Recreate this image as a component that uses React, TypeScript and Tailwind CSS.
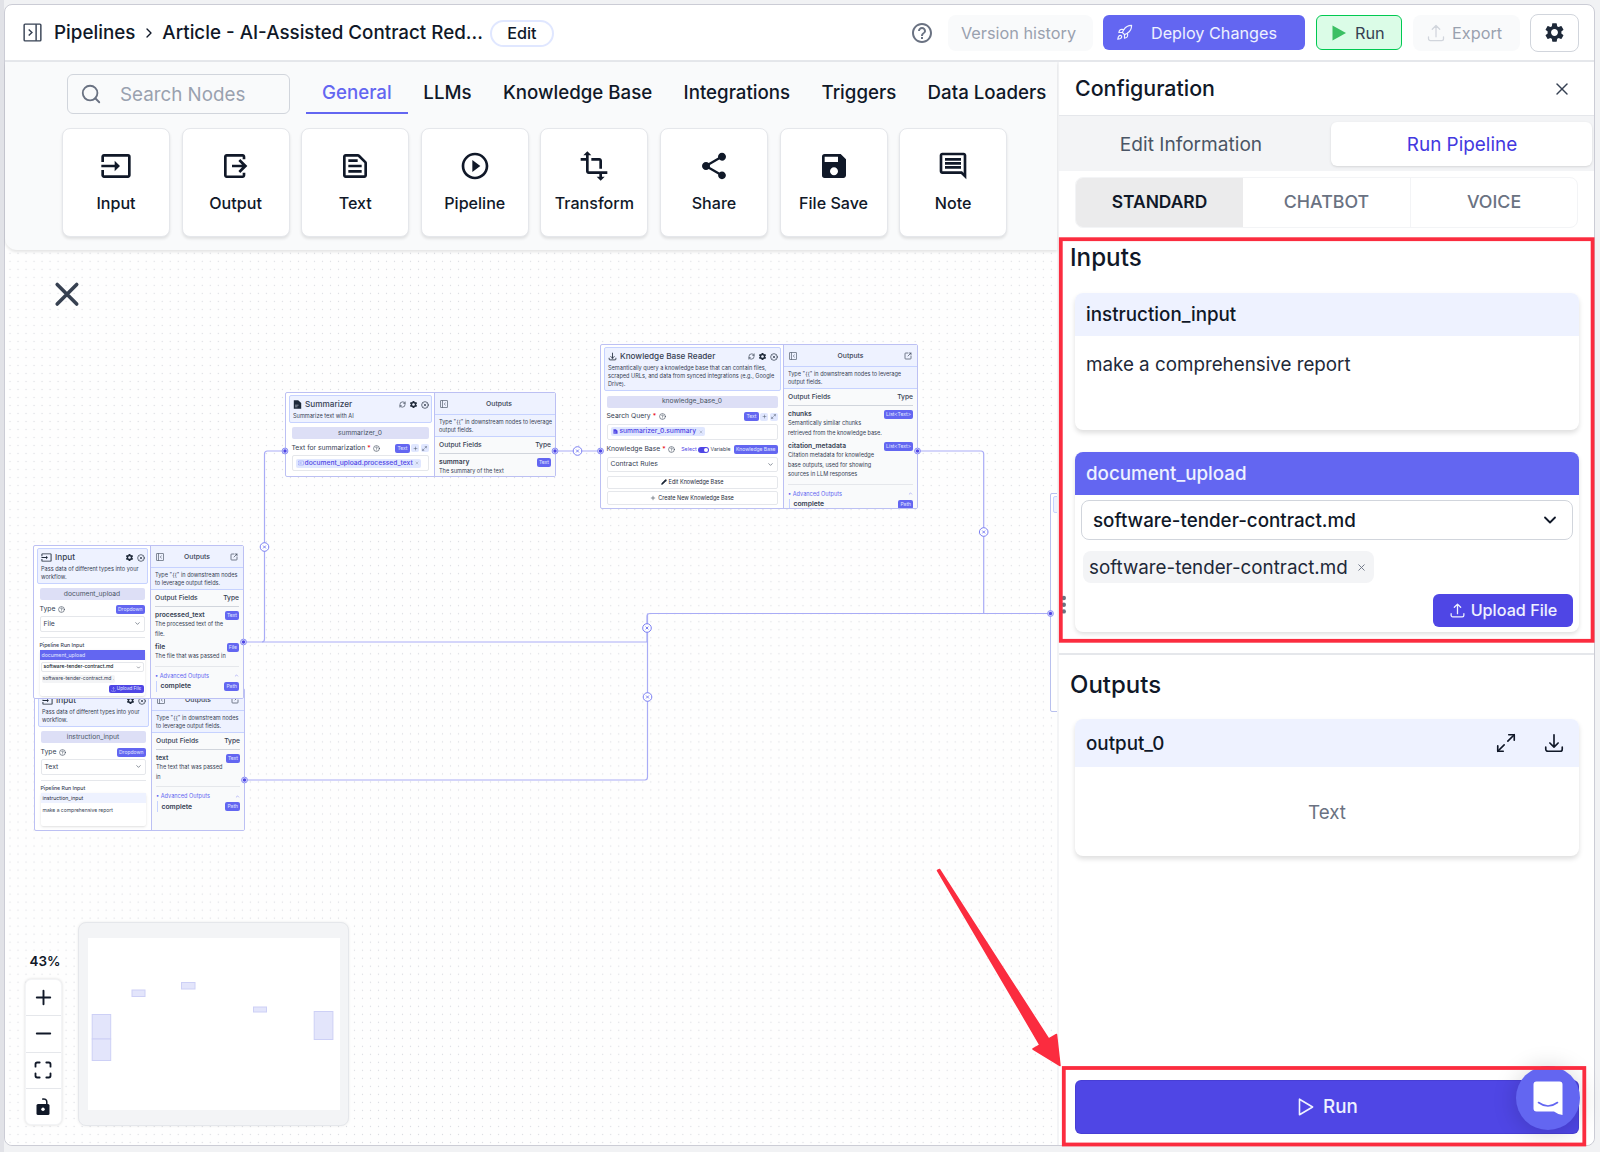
import React from 'react';
import {
  ChevronDown,
  ChevronRight,
  ChevronUp,
  CircleQuestionMark,
  CircleX,
  Maximize,
  Maximize2,
  Minus,
  Pencil,
  Plus,
  RefreshCw,
  Rocket,
  Search,
  SquareArrowOutUpRight,
  X,
} from 'lucide-react';
import {
  MdHelpOutline,
  MdInput,
  MdOutlineComment,
  MdOutlineTextSnippet,
  MdPlayCircleOutline,
  MdSave,
  MdSettings,
  MdShare,
  MdTransform,
} from 'react-icons/md';
import { HiOutlineArrowDownTray, HiOutlineArrowUpTray } from 'react-icons/hi2';

/* ---------- icons ---------- */

const PanelIcon = ({ className = '', flip = false }: { className?: string; flip?: boolean }) => (
  <svg viewBox="0 0 20 20" fill="none" stroke="currentColor" strokeWidth="1.5" className={className}>
    <g transform={flip ? 'matrix(-1 0 0 1 20 0)' : undefined}>
      <rect x="1.2" y="1.2" width="17.6" height="17.6" rx="1" />
      <path d="M13.8 1.2v17.6M6 6.8l3.4 3.2L6 13.2" />
    </g>
  </svg>
);

const OutputIcon = ({ className = '' }: { className?: string }) => (
  <svg viewBox="0 0 24 24" fill="currentColor" className={className}>
    <path d="M17 17v2.1H5V5h12v2h2V5c0-1.1-.9-2-2-2H5c-1.1 0-2 .9-2 2v14c0 1.1.9 2 2 2h12c1.1 0 2-.9 2-2v-2z" />
    <path d="M15.2 6.8l-1.4 1.4 2.7 2.8H9v2h7.5l-2.7 2.8 1.4 1.4 5.3-5.2z" />
  </svg>
);

const PlayOutline = ({ className = '' }: { className?: string }) => (
  <svg viewBox="0 0 16 18" fill="none" stroke="currentColor" strokeWidth="1.6" strokeLinejoin="round" className={className}>
    <path d="M1.5 1.2v15.6L14.6 9z" />
  </svg>
);

const UnlockIcon = ({ className = '' }: { className?: string }) => (
  <svg viewBox="0 0 14 17" className={className}>
    <rect x="0.5" y="6" width="13" height="11" rx="1.5" fill="currentColor" />
    <path d="M6.2 1.3c2.6-1 4.6.4 4.6 2.5V6" fill="none" stroke="currentColor" strokeWidth="1.5" />
    <circle cx="7" cy="11.3" r="1.7" fill="#fff" />
  </svg>
);

/* ---------- header ---------- */

const Header: React.FC = () => (
  <header className="flex h-[57px] shrink-0 items-center border-b-2 border-gray-200 pl-[18px] pr-[15px] text-gray-900">
    <PanelIcon className="h-[19px] w-[19px] text-gray-700" />
    <span className="ml-3 pt-px text-[18.8px] font-medium">Pipelines</span>
    <ChevronRight className="mx-[5.5px] h-4 w-4" strokeWidth={2} />
    <span className="pt-px text-[18.8px] font-medium">Article - AI-Assisted Contract Red...</span>
    <button className="mt-px ml-[7px] h-[27px] w-[64px] rounded-full border-2 border-indigo-100 text-[16.2px] leading-none font-medium">Edit</button>

    <div className="ml-auto flex items-center">
      <MdHelpOutline className="mr-[14px] h-6 w-6 text-gray-500" />
      <button className="mr-[10px] h-9 w-[145px] rounded-lg bg-gray-50 pt-px pr-[4px] text-[16.3px] text-gray-400">Version history</button>
      <button className="mr-[11px] flex h-[35px] w-[202px] items-center rounded-md bg-[#6366f1] pl-[13px] text-[16.2px] text-indigo-50">
        <Rocket className="mr-[18px] h-[17px] w-[17px]" strokeWidth={1.7} />
        <span className="pt-px">Deploy Changes</span>
      </button>
      <button className="mr-[11px] flex h-[35px] w-[86px] items-center rounded-md border-[1.5px] border-green-500 bg-green-100 pl-[15px] text-[16.3px] text-gray-700">
        <svg viewBox="0 0 14 16" className="mr-[9px] h-4 w-[14px] fill-[#3bbf63]">
          <path d="M0.5 0.5v15L14 8z" />
        </svg>
        <span className="pt-px">Run</span>
      </button>
      <button className="mr-[10px] flex h-9 w-[107px] items-center rounded-lg bg-gray-50 pl-[13px] text-[16.3px] text-gray-400">
        <HiOutlineArrowUpTray className="mr-[6px] h-5 w-5 text-gray-300" />
        <span className="pt-px">Export</span>
      </button>
      <button className="flex h-[38px] w-[49px] items-center justify-center rounded-lg border-[1.5px] border-gray-300">
        <MdSettings className="h-[23px] w-[23px] text-gray-800" />
      </button>
    </div>
  </header>
);

/* ---------- node toolbar ---------- */

const tabs = ['General', 'LLMs', 'Knowledge Base', 'Integrations', 'Triggers', 'Data Loaders'];

const palette = [
  { label: 'Input', icon: MdInput },
  { label: 'Output', icon: OutputIcon },
  { label: 'Text', icon: MdOutlineTextSnippet },
  { label: 'Pipeline', icon: MdPlayCircleOutline },
  { label: 'Transform', icon: MdTransform },
  { label: 'Share', icon: MdShare },
  { label: 'File Save', icon: MdSave },
  { label: 'Note', icon: MdOutlineComment },
];

const Toolbar: React.FC = () => (
  <div className="z-10 h-[188px] shrink-0 rounded-bl-xl bg-gray-50 pt-[10px] shadow-[0_2px_3px_rgba(0,0,0,0.1)]">
    <div className="flex h-[43px] pl-[62px]">
      <div className="mt-[2px] flex h-10 w-[223px] shrink-0 items-center rounded-md border-[1.5px] border-gray-300 pl-[12px]">
        <Search className="h-[22px] w-[22px] text-gray-500" strokeWidth={2} />
        <span className="ml-[18px] pt-[2px] text-[18.8px] text-gray-400">Search Nodes</span>
      </div>
      <nav className="ml-4 flex">
        {tabs.map((tab, i) => (
          <div
            key={tab}
            className={
              i === 0
                ? 'h-[42px] border-b-2 border-[#6366f1] px-4 pt-[7px] text-[18.7px] font-medium whitespace-nowrap text-[#6366f1]'
                : 'h-[42px] px-[15.7px] pt-[7px] text-[18.7px] font-medium whitespace-nowrap text-gray-900'
            }
          >
            {tab}
          </div>
        ))}
      </nav>
    </div>
    <div className="mt-[13px] flex gap-[11.6px] pl-[57px]">
      {palette.map(({ label, icon: Icon }) => (
        <div
          key={label}
          className="flex h-[109px] w-[108px] shrink-0 flex-col items-center rounded-lg border-[1.5px] border-gray-200 bg-white pt-[21px] text-gray-900 shadow-[0_2px_3px_rgba(0,0,0,0.1)]"
        >
          <Icon className="h-8 w-8" />
          <span className="mt-[9px] text-[16.1px] leading-6 font-medium whitespace-nowrap">{label}</span>
        </div>
      ))}
    </div>
  </div>
);

/* ---------- pipeline nodes ---------- */

const Badge = ({ children }: { children: React.ReactNode }) => (
  <span className="flex h-[9px] shrink-0 items-center rounded-[2px] bg-[#6366f1] px-[2px] text-[5px] leading-none whitespace-nowrap text-indigo-100">
    {children}
  </span>
);

const SoftButton = ({ children }: { children: React.ReactNode }) => (
  <span className="flex h-[8px] w-[8px] items-center justify-center rounded-[2px] bg-indigo-100 text-gray-700">{children}</span>
);

interface NodeHeadProps {
  icon: React.ReactNode;
  title: string;
  lines: string[];
  refresh?: boolean;
  className: string;
}

const NodeHead = ({ icon, title, lines, refresh = false, className }: NodeHeadProps) => (
  <div className={`rounded-[2px] border border-indigo-200 bg-[#eef2ff] pl-[3.5px] ${className}`}>
    <div className="flex h-[17px] items-center pr-[2px] text-gray-800">
      {icon}
      <span className="ml-[3px] text-[8.2px] font-medium whitespace-nowrap text-gray-700">{title}</span>
      <span className="ml-auto flex items-center gap-[3px]">
        {refresh && <RefreshCw className="h-[7px] w-[7px]" />}
        <MdSettings className="h-[9px] w-[9px]" />
        <CircleX className="h-[8px] w-[8px]" />
      </span>
    </div>
    {lines.map((line) => (
      <p key={line} className="relative top-[-1px] text-[5.6px] leading-[8px] whitespace-nowrap text-gray-700">{line}</p>
    ))}
  </div>
);

const Slug = ({ children }: { children: React.ReactNode }) => (
  <div className="mx-[3px] mt-[4.5px] flex h-[12px] items-center justify-center rounded-[2px] bg-[#dddff6] text-[6.7px] text-gray-600">
    {children}
  </div>
);

const FieldRow = ({ label, required = false, children }: { label: string; required?: boolean; children: React.ReactNode }) => (
  <div className="mx-[3px] flex h-[16px] items-center pt-[2px] text-[6.8px] whitespace-nowrap text-gray-700">
    {label}
    {required && <span className="ml-[2px] text-red-600">*</span>}
    <CircleQuestionMark className="ml-[2.5px] h-[7px] w-[7px]" />
    <span className="ml-auto flex items-center gap-[1.5px]">{children}</span>
  </div>
);

const NodeSelect = ({ children }: { children: React.ReactNode }) => (
  <div className="mx-[3px] flex h-[15.5px] items-center justify-between rounded-[2px] border border-gray-200 bg-white px-[3px] text-[6.8px] text-gray-700">
    {children}
    <ChevronDown className="h-[7px] w-[7px]" />
  </div>
);

interface Field {
  name: string;
  type: string;
  lines: string[];
}

const OutputsPanel = ({ hint, fields, complete = true, open = true }: { hint: string[]; fields: Field[]; complete?: boolean; open?: boolean }) => (
  <div className="min-w-0 flex-1 overflow-hidden bg-gray-50 text-gray-700">
    <div className="flex h-[22px] items-center justify-between border-b border-indigo-200 bg-[#eef2ff] pt-[1px] pr-[5px] pl-[5px]">
      <PanelIcon flip className="h-[8px] w-[8px]" />
      <span className="text-[6.8px] font-medium">Outputs</span>
      {open ? <SquareArrowOutUpRight className="h-[8px] w-[8px]" /> : <span />}
    </div>
    <div className="h-[22px] border-b border-indigo-200 bg-[#eef2ff] pt-[2.5px] pl-[4px]">
      {hint.map((line) => (
        <p key={line} className="text-[5.55px] leading-[8px] whitespace-nowrap">{line}</p>
      ))}
    </div>
    <div className="mr-[4px] ml-[4px]">
      <div className="flex h-[17px] items-center justify-between border-b border-gray-300 pt-[1px] text-[6.7px] font-medium whitespace-nowrap">
        <span>Output Fields</span>
        <span>Type</span>
      </div>
      {fields.map((field) => (
        <div key={field.name} className="mt-[3.2px]">
          <div className="flex h-[10px] items-center justify-between">
            <span className="text-[6.7px] font-semibold">{field.name}</span>
            <Badge>{field.type}</Badge>
          </div>
          {field.lines.map((line) => (
            <p key={line} className="text-[5.6px] leading-[9.5px] whitespace-nowrap">{line}</p>
          ))}
        </div>
      ))}
      {complete && (
        <div className="mt-[4px] border-t border-gray-200 pt-[4px]">
          <div className="flex h-[10px] items-center justify-between text-[5.6px] whitespace-nowrap text-[#6366f1]">
            <span>• Advanced Outputs</span>
            <ChevronUp className="h-[5px] w-[5px]" />
          </div>
          <div className="ml-[1px] flex h-[11px] items-center justify-between border-l border-indigo-200 pl-[3.5px]">
            <span className="text-[6.8px] font-semibold">complete</span>
            <Badge>Path</Badge>
          </div>
        </div>
      )}
    </div>
  </div>
);

const NodeShell = ({ left, right, className, leftWidth }: { left: React.ReactNode; right: React.ReactNode; className: string; leftWidth: string }) => (
  <div className={`absolute flex overflow-hidden rounded-[2px] border-[1.5px] border-[#bcc0f3] bg-white ${className}`}>
    <div className={`shrink-0 border-r-[1.5px] border-[#bcc0f3] px-[2.5px] pt-[2px] ${leftWidth}`}>{left}</div>
    {right}
  </div>
);

const inputHint = ['Type "{{" in downstream nodes', 'to leverage output fields.'];
const wideHint = ['Type "{{" in downstream nodes to leverage', 'output fields.'];
const inputLines = ['Pass data of different types into your', 'workflow.'];

const InstructionNode = () => (
  <NodeShell
    className="top-[438px] left-[29px] h-[143px] w-[211px]"
    leftWidth="w-[117px]"
    left={
      <>
        <NodeHead className="h-[35.5px]" icon={<MdInput className="h-[11px] w-[11px]" />} title="Input" lines={inputLines} />
        <Slug>instruction_input</Slug>
        <FieldRow label="Type"><Badge>Dropdown</Badge></FieldRow>
        <NodeSelect>Text</NodeSelect>
        <div className="mx-[3px] mt-[5.5px] border-t border-gray-200 pt-[3px] text-[5.2px] leading-[8px] font-medium text-gray-700">Pipeline Run Input</div>
        <div className="mx-[3px] mt-[1px] h-[33px] rounded-[2px] bg-white shadow">
          <div className="h-[10px] bg-[#eef2ff] pl-[2px] text-[5.2px] leading-[10px] text-gray-800">instruction_input</div>
          <p className="pt-[2px] pl-[2px] text-[5px] leading-[10px] whitespace-nowrap text-gray-700">make a comprehensive report</p>
        </div>
      </>
    }
    right={<OutputsPanel hint={inputHint} fields={[{ name: 'text', type: 'Text', lines: ['The text that was passed', 'in'] }]} />}
  />
);

const DocumentNode = () => (
  <NodeShell
    className="top-[295px] left-[28px] h-[154px] w-[211px]"
    leftWidth="w-[117px]"
    left={
      <>
        <NodeHead className="h-[35.5px]" icon={<MdInput className="h-[11px] w-[11px]" />} title="Input" lines={inputLines} />
        <Slug>document_upload</Slug>
        <FieldRow label="Type"><Badge>Dropdown</Badge></FieldRow>
        <NodeSelect>File</NodeSelect>
        <div className="mx-[3px] mt-[5.5px] border-t border-gray-200 pt-[3px] text-[5.2px] leading-[8px] font-medium text-gray-700">Pipeline Run Input</div>
        <div className="mx-[3px] mt-[1px] h-[46px] rounded-[2px] bg-white shadow">
          <div className="h-[10px] bg-[#6366f1] pl-[2px] text-[5.2px] leading-[10px] text-indigo-100">document_upload</div>
          <div className="mx-[1px] mt-[2px] flex h-[10px] items-center justify-between rounded-[2px] border border-gray-200 px-[2px] text-[5px] font-medium text-gray-900">
            software-tender-contract.md
            <ChevronDown className="h-[5px] w-[5px]" />
          </div>
          <div className="mt-[3px] ml-[2px] flex h-[8px] w-[73px] items-center rounded-[2px] bg-gray-100 pl-[1px] text-[5px] whitespace-nowrap text-gray-700">
            software-tender-contract.md
            <X className="ml-[2px] h-[3px] w-[3px]" />
          </div>
          <div className="mt-[2px] mr-[1px] ml-auto flex h-[8px] w-[35px] items-center justify-center gap-[1px] rounded-[2px] bg-[#4f46e5] text-[4.6px] text-indigo-100">
            <HiOutlineArrowUpTray className="h-[5px] w-[5px]" />
            Upload File
          </div>
        </div>
      </>
    }
    right={
      <OutputsPanel
        hint={inputHint}
        fields={[
          { name: 'processed_text', type: 'Text', lines: ['The processed text of the', 'file.'] },
          { name: 'file', type: 'File', lines: ['The file that was passed in'] },
        ]}
      />
    }
  />
);

const FileGlyph = ({ className = '' }: { className?: string }) => (
  <svg viewBox="0 0 9 9" className={className} fill="currentColor">
    <path d="M0.8 0.3H5.2L8.2 3v5.7H0.8z" />
    <path d="M2 5.2h3.5M2 6.8h2.5" stroke="#eef2ff" strokeWidth="0.5" />
  </svg>
);

const SummarizerNode = () => (
  <NodeShell
    className="top-[142px] left-[280px] h-[85px] w-[271px]"
    leftWidth="w-[149px]"
    left={
      <>
        <NodeHead className="h-[27.5px]" refresh icon={<FileGlyph className="h-[9px] w-[9px]" />} title="Summarizer" lines={['Summarize text with AI']} />
        <Slug>summarizer_0</Slug>
        <FieldRow label="Text for summarization" required>
          <Badge>Text</Badge>
          <SoftButton><Plus className="h-[5px] w-[5px]" /></SoftButton>
          <SoftButton><Maximize2 className="h-[5px] w-[5px]" /></SoftButton>
        </FieldRow>
        <div className="mx-[3px] flex h-[16px] items-center rounded-[2px] border border-gray-200 px-[3px]">
          <span className="flex h-[9px] items-center rounded-[2px] bg-indigo-100 px-[2px] text-[6.7px] font-medium whitespace-nowrap text-[#4f46e5]">
            <MdInput className="mr-[1px] h-[6px] w-[6px] text-[#818cf8]" />
            document_upload.processed_text
            <X className="ml-[2px] h-[4px] w-[4px] text-gray-500" />
          </span>
        </div>
      </>
    }
    right={<OutputsPanel open={false} complete={false} hint={wideHint} fields={[{ name: 'summary', type: 'Text', lines: ['The summary of the text'] }]} />}
  />
);

const KnowledgeNode = () => (
  <NodeShell
    className="top-[94px] left-[595px] h-[165px] w-[318px]"
    leftWidth="w-[183px]"
    left={
      <>
        <NodeHead
          className="h-[44px]"
          refresh
          icon={<HiOutlineArrowDownTray className="h-[9px] w-[9px]" strokeWidth={2.2} />}
          title="Knowledge Base Reader"
          lines={['Semantically query a knowledge base that can contain files,', 'scraped URLs, and data from synced integrations (e.g., Google', 'Drive).']}
        />
        <Slug>knowledge_base_0</Slug>
        <FieldRow label="Search Query" required>
          <Badge>Text</Badge>
          <SoftButton><Plus className="h-[5px] w-[5px]" /></SoftButton>
          <SoftButton><Maximize2 className="h-[5px] w-[5px]" /></SoftButton>
        </FieldRow>
        <div className="mx-[3px] flex h-[16px] items-center rounded-[2px] border border-gray-200 px-[3px]">
          <span className="flex h-[9px] items-center rounded-[2px] bg-indigo-100 px-[2px] text-[6.7px] font-medium whitespace-nowrap text-[#4f46e5]">
            <FileGlyph className="mr-[2px] h-[5px] w-[5px]" />
            summarizer_0.summary
            <X className="ml-[3px] h-[4px] w-[4px] text-gray-500" />
          </span>
        </div>
        <div className="pt-[1px]">
          <FieldRow label="Knowledge Base" required>
            <span className="text-[5.2px] text-[#4f46e5]">Select</span>
            <span className="flex h-[6px] w-[11px] items-center justify-end rounded-full bg-[#4f46e5] p-[1px]">
              <span className="h-[4px] w-[4px] rounded-full bg-white" />
            </span>
            <span className="mr-[2px] text-[5.2px]">Variable</span>
            <Badge>Knowledge Base</Badge>
          </FieldRow>
        </div>
        <NodeSelect>Contract Rules</NodeSelect>
        <div className="mx-[3px] mt-[3.5px] flex h-[13.5px] items-center justify-center gap-[2px] rounded-[2px] border border-gray-200 text-[5.5px] text-gray-800">
          <Pencil className="h-[6px] w-[6px] fill-gray-800" />
          Edit Knowledge Base
        </div>
        <div className="mx-[3px] mt-[2px] flex h-[13.5px] items-center justify-center gap-[2px] rounded-[2px] border border-gray-200 text-[5.5px] text-gray-800">
          <Plus className="h-[6px] w-[6px]" />
          Create New Knowledge Base
        </div>
      </>
    }
    right={
      <OutputsPanel
        hint={wideHint}
        fields={[
          { name: 'chunks', type: 'List<Text>', lines: ['Semantically similar chunks', 'retrieved from the knowledge base.'] },
          { name: 'citation_metadata', type: 'List<Text>', lines: ['Citation metadata for knowledge', 'base outputs, used for showing', 'sources in LLM responses'] },
        ]}
      />
    }
  />
);

/* ---------- canvas ---------- */

const handles = [
  [243.5, 642],
  [244.5, 780],
  [285, 451],
  [555, 451],
  [600.5, 451],
  [917.5, 451],
  [1050.5, 613.5],
];

const edgeButtons = [
  [264.5, 547],
  [577.5, 451],
  [647, 628],
  [647.5, 697],
  [983.7, 532],
];

const Handles: React.FC = () => (
  <svg viewBox="5 250 1052 895" className="absolute inset-0 h-[895px] w-[1052px]">
    {handles.map(([x, y]) => (
      <g key={`${x}-${y}`}>
        <circle cx={x} cy={y} r="2.9" fill="#e0e3fd" stroke="#8b8ef5" strokeWidth="1" />
        <circle cx={x} cy={y} r="1.7" fill="#4f46e5" />
      </g>
    ))}
    {edgeButtons.map(([x, y]) => (
      <g key={`${x}-${y}`} stroke="#7c80f3" strokeWidth="1">
        <circle cx={x} cy={y} r="4.3" fill="#fff" />
        <path d={`M${x - 1.4} ${y - 1.4}l2.8 2.8m0-2.8l-2.8 2.8`} />
      </g>
    ))}
  </svg>
);

const miniNodes = [
  { x: 131.5, y: 990, w: 13, h: 6.5 },
  { x: 181, y: 982.5, w: 13.5, h: 6.5 },
  { x: 253, y: 1007, w: 13, h: 5 },
  { x: 91.7, y: 1014.5, w: 18.5, h: 24.5 },
  { x: 91.7, y: 1039, w: 18.5, h: 21.5 },
  { x: 313.7, y: 1011.5, w: 18.7, h: 28 },
];

const Canvas: React.FC = () => (
  <div className="relative flex-1 overflow-hidden rounded-bl-lg bg-[#fefefe]">
    <svg viewBox="5 250 1052 895" className="absolute inset-0 h-[895px] w-[1052px]" fill="none">
      <defs>
        <pattern id="dots" x="6" y="249.3" width="8.01" height="8.01" patternUnits="userSpaceOnUse">
          <circle cx="4" cy="4" r="0.62" fill="#d6d8de" />
        </pattern>
      </defs>
      <rect x="5" y="250" width="1052" height="895" fill="url(#dots)" />
      <g stroke="#a9acf6" strokeWidth="1.2">
        <path d="M243 642H647V616.5Q647 613.5 650 613.5H1050" />
        <path d="M262 642Q264.5 642 264.5 639V454Q264.5 451 267.5 451H285" />
        <path d="M555 451H600" />
        <path d="M917 451H981Q983.7 451 983.7 454V613.5" />
        <path d="M244 780H645Q647.5 780 647.5 777V613.5" />
      </g>
      <path d="M57.2 284.5L76.7 304M76.7 284.5L57.2 304" stroke="#374151" strokeWidth="3.6" strokeLinecap="round" />
    </svg>

    <InstructionNode />
    <DocumentNode />
    <SummarizerNode />
    <KnowledgeNode />
    <div className="absolute top-[243px] left-[1045px] h-[219px] w-[40px] rounded-[2px] border-[1.5px] border-[#b8c0ee] bg-white p-[2px]">
      <div className="h-[17px] rounded-[2px] border border-indigo-200 bg-[#eef2ff]" />
    </div>
    <Handles />

    <div className="absolute bottom-[20px] left-[19.5px] flex w-[37px] flex-col items-center text-gray-900">
      <span className="mb-[8px] ml-[4px] text-[13.4px] leading-5 font-semibold">43%</span>
      <div className="flex h-[146px] w-[37px] flex-col divide-y-[1.5px] divide-gray-200 rounded-md border border-gray-100 bg-white shadow-[0_0_3px_rgba(0,0,0,0.15)]">
        <span className="flex flex-1 items-center justify-center"><Plus className="h-[23px] w-[23px]" /></span>
        <span className="flex flex-1 items-center justify-center"><Minus className="h-[23px] w-[23px]" /></span>
        <span className="flex flex-1 items-center justify-center"><Maximize className="h-[20px] w-[20px]" strokeWidth={2.2} /></span>
        <span className="flex flex-1 items-center justify-center"><UnlockIcon className="h-[17px] w-[14px]" /></span>
      </div>
    </div>

    <div className="absolute top-[672px] left-[73px] h-[204px] w-[271px] rounded-lg border border-gray-200 bg-gray-100 pt-[15px] pl-[9px] shadow-[0_0_3px_rgba(0,0,0,0.08)]">
      <svg viewBox="88 938 252 172" className="h-[172px] w-[252px] bg-white">
        {miniNodes.map((n) => (
          <rect key={`${n.x}-${n.y}`} x={n.x + 0.5} y={n.y} width={n.w} height={n.h} fill="#e3e5fb" stroke="#cdd0f6" />
        ))}
      </svg>
    </div>
  </div>
);

/* ---------- configuration panel ---------- */

const ConfigPanel: React.FC = () => (
  <aside className="relative flex w-[537px] shrink-0 flex-col rounded-br-lg border-l-2 border-gray-100 bg-white text-gray-900">
    <div className="flex h-[54px] shrink-0 items-center justify-between border-b-[1.5px] border-gray-200 pr-[22px] pl-[16px]">
      <h2 className="text-[21.4px] font-medium">Configuration</h2>
      <X className="h-[20px] w-[20px] text-gray-700" strokeWidth={1.7} />
    </div>
    <div className="flex h-[55px] shrink-0 bg-gray-100 pt-[6px] pb-[5px] pr-[2px] text-[19.1px]">
      <div className="flex w-[272px] items-center justify-center text-gray-600">
        <span className="-ml-[8px] pt-px">Edit Information</span>
      </div>
      <div className="flex flex-1 items-center justify-center rounded-md bg-white text-[18.9px] shadow-sm">
        <span className="ml-px pt-[2px] text-[#4338e0]">Run Pipeline</span>
      </div>
    </div>
    <div className="mt-[6px] ml-[16px] flex h-[51px] w-[503px] shrink-0 overflow-hidden rounded-lg border border-gray-100 text-[17.8px] font-medium text-gray-500">
      <div className="flex w-[167px] items-center justify-center bg-[#ebebec] text-[17.4px] font-semibold text-gray-900">STANDARD</div>
      <div className="flex w-[168px] items-center justify-center border-r border-gray-100">CHATBOT</div>
      <div className="flex flex-1 items-center justify-center">VOICE</div>
    </div>

    <h3 className="mt-[13px] ml-[11px] text-[24.2px] leading-[34px] font-medium">Inputs</h3>
    <div className="mt-[18px] ml-[16px] h-[137px] w-[504px] shrink-0 overflow-hidden rounded-lg bg-white shadow-[0_3px_5px_rgba(0,0,0,0.13)]">
      <div className="flex h-[43px] items-center bg-[#eef2ff] pt-[2px] pl-[11px] text-[18.8px] font-medium">instruction_input</div>
      <p className="pt-[15px] pl-[11px] text-[18.8px] leading-[28px] text-gray-800">make a comprehensive report</p>
    </div>
    <div className="mt-[22px] ml-[16px] h-[180px] w-[504px] shrink-0 overflow-hidden rounded-lg bg-white shadow-[0_2px_4px_rgba(0,0,0,0.13)]">
      <div className="flex h-[43px] items-center bg-[#6366f1] pt-[2px] pl-[11px] text-[18.8px] font-medium text-indigo-50">document_upload</div>
      <div className="mx-[6px] mt-[5px] flex h-[40px] items-center justify-between rounded-lg border-[1.5px] border-gray-300 pr-[12px] pl-[11px] text-[18.8px] font-medium">
        <span className="pt-[2px]">software-tender-contract.md</span>
        <ChevronDown className="h-[20px] w-[20px]" strokeWidth={2.2} />
      </div>
      <div className="mt-[11px] ml-[8px] flex h-[32px] w-[291px] items-center rounded-lg bg-gray-100 pl-[6px] text-[18.8px] text-gray-800">
        <span className="pt-[2px]">software-tender-contract.md</span>
        <X className="ml-[8px] h-[11px] w-[11px] text-gray-500" />
      </div>
      <button className="mt-[11px] mr-[6px] ml-auto flex h-[33px] w-[140px] items-center justify-center gap-[5px] rounded-md bg-[#4f46e5] text-[16.2px] font-medium text-indigo-50">
        <HiOutlineArrowUpTray className="h-[17px] w-[17px]" strokeWidth={1.8} />
        Upload File
      </button>
    </div>

    <div className="mt-[21px] h-0 shrink-0 border-t-2 border-gray-200" />
    <h3 className="mt-[13px] ml-[11px] text-[24px] leading-[34px] font-medium">Outputs</h3>
    <div className="mt-[17px] ml-[16px] h-[137px] w-[504px] shrink-0 overflow-hidden rounded-lg bg-white shadow-[0_3px_5px_rgba(0,0,0,0.13)]">
      <div className="flex h-[48px] items-center bg-[#eef2ff] pr-[14px] pl-[11px] text-[18.8px] font-medium">
        <span className="pt-[2px]">output_0</span>
        <Maximize2 className="mr-[26px] ml-auto h-[22px] w-[22px]" strokeWidth={1.8} />
        <HiOutlineArrowDownTray className="h-[22px] w-[22px]" strokeWidth={1.8} />
      </div>
      <p className="pt-[32px] text-center text-[18.8px] leading-[28px] text-gray-500">Text</p>
    </div>

    <button className="mt-auto mb-[11px] ml-[16px] flex h-[54px] w-[504px] shrink-0 items-center justify-center gap-[9px] rounded-md border border-[#4338ca]/60 bg-[#4f46e5] text-[18.8px] font-medium text-indigo-50">
      <PlayOutline className="ml-[2px] h-[18px] w-[16px]" />
      <span className="pt-px">Run</span>
    </button>

    {/* support chat launcher */}
    <div className="absolute right-[14px] bottom-[15px] flex h-16 w-16 items-center justify-center rounded-full bg-[#6366f1] shadow-[0_2px_24px_rgba(0,0,0,0.18)]">
      <svg viewBox="0 0 30 34" className="h-[34px] w-[30px]">
        <path d="M3.5 0.5h23Q29.5 0.5 29.5 3.5V34Q25 33.5 21 30.5H3.5Q0.5 30.5 0.5 27.5V3.5Q0.5 0.5 3.5 0.5z" fill="#fff" />
        <path d="M5.5 21.5Q15 28.5 24.5 21.5" fill="none" stroke="#6366f1" strokeWidth="1.6" strokeLinecap="round" />
      </svg>
    </div>
  </aside>
);

/* red call-outs drawn over the page */
const Annotations: React.FC = () => (
  <svg viewBox="0 0 1600 1152" className="pointer-events-none absolute inset-0 z-20 h-[1152px] w-[1600px]">
    <g fill="#6b7280">
      <circle cx="1063.8" cy="598" r="2.2" />
      <circle cx="1063.8" cy="604.7" r="2.2" />
      <circle cx="1063.8" cy="611.4" r="2.2" />
    </g>
    <g fill="none" stroke="#fb2c3f" strokeWidth="3.8">
      <rect x="1060.8" y="239.2" width="531.8" height="401.6" />
      <rect x="1063.8" y="1068" width="520.5" height="76.5" />
    </g>
    <path
      d="M937.5 870.5L1040 1045L1033 1049L1060 1065.5L1056.5 1034.5L1048.7 1039L939.5 869.5z"
      fill="#fb2c3f"
      stroke="#fb2c3f"
      strokeWidth="1.5"
      strokeLinejoin="round"
    />
  </svg>
);

export default function App() {
  return (
    <div className="relative h-[1152px] w-[1600px] overflow-hidden border-l-4 border-[#e1e2e7] bg-[#f1f2f4] pt-1 font-['Inter',sans-serif]">
      <div className="flex h-[1142px] w-[1591px] flex-col rounded-lg border border-[#cbccd5] bg-white">
        <Header />
        <div className="flex min-h-0 flex-1">
          <main className="flex w-[1052px] shrink-0 flex-col">
            <Toolbar />
            <Canvas />
          </main>
          <ConfigPanel />
        </div>
      </div>
      <div className="absolute inset-y-0 -left-1">
        <Annotations />
      </div>
    </div>
  );
}
